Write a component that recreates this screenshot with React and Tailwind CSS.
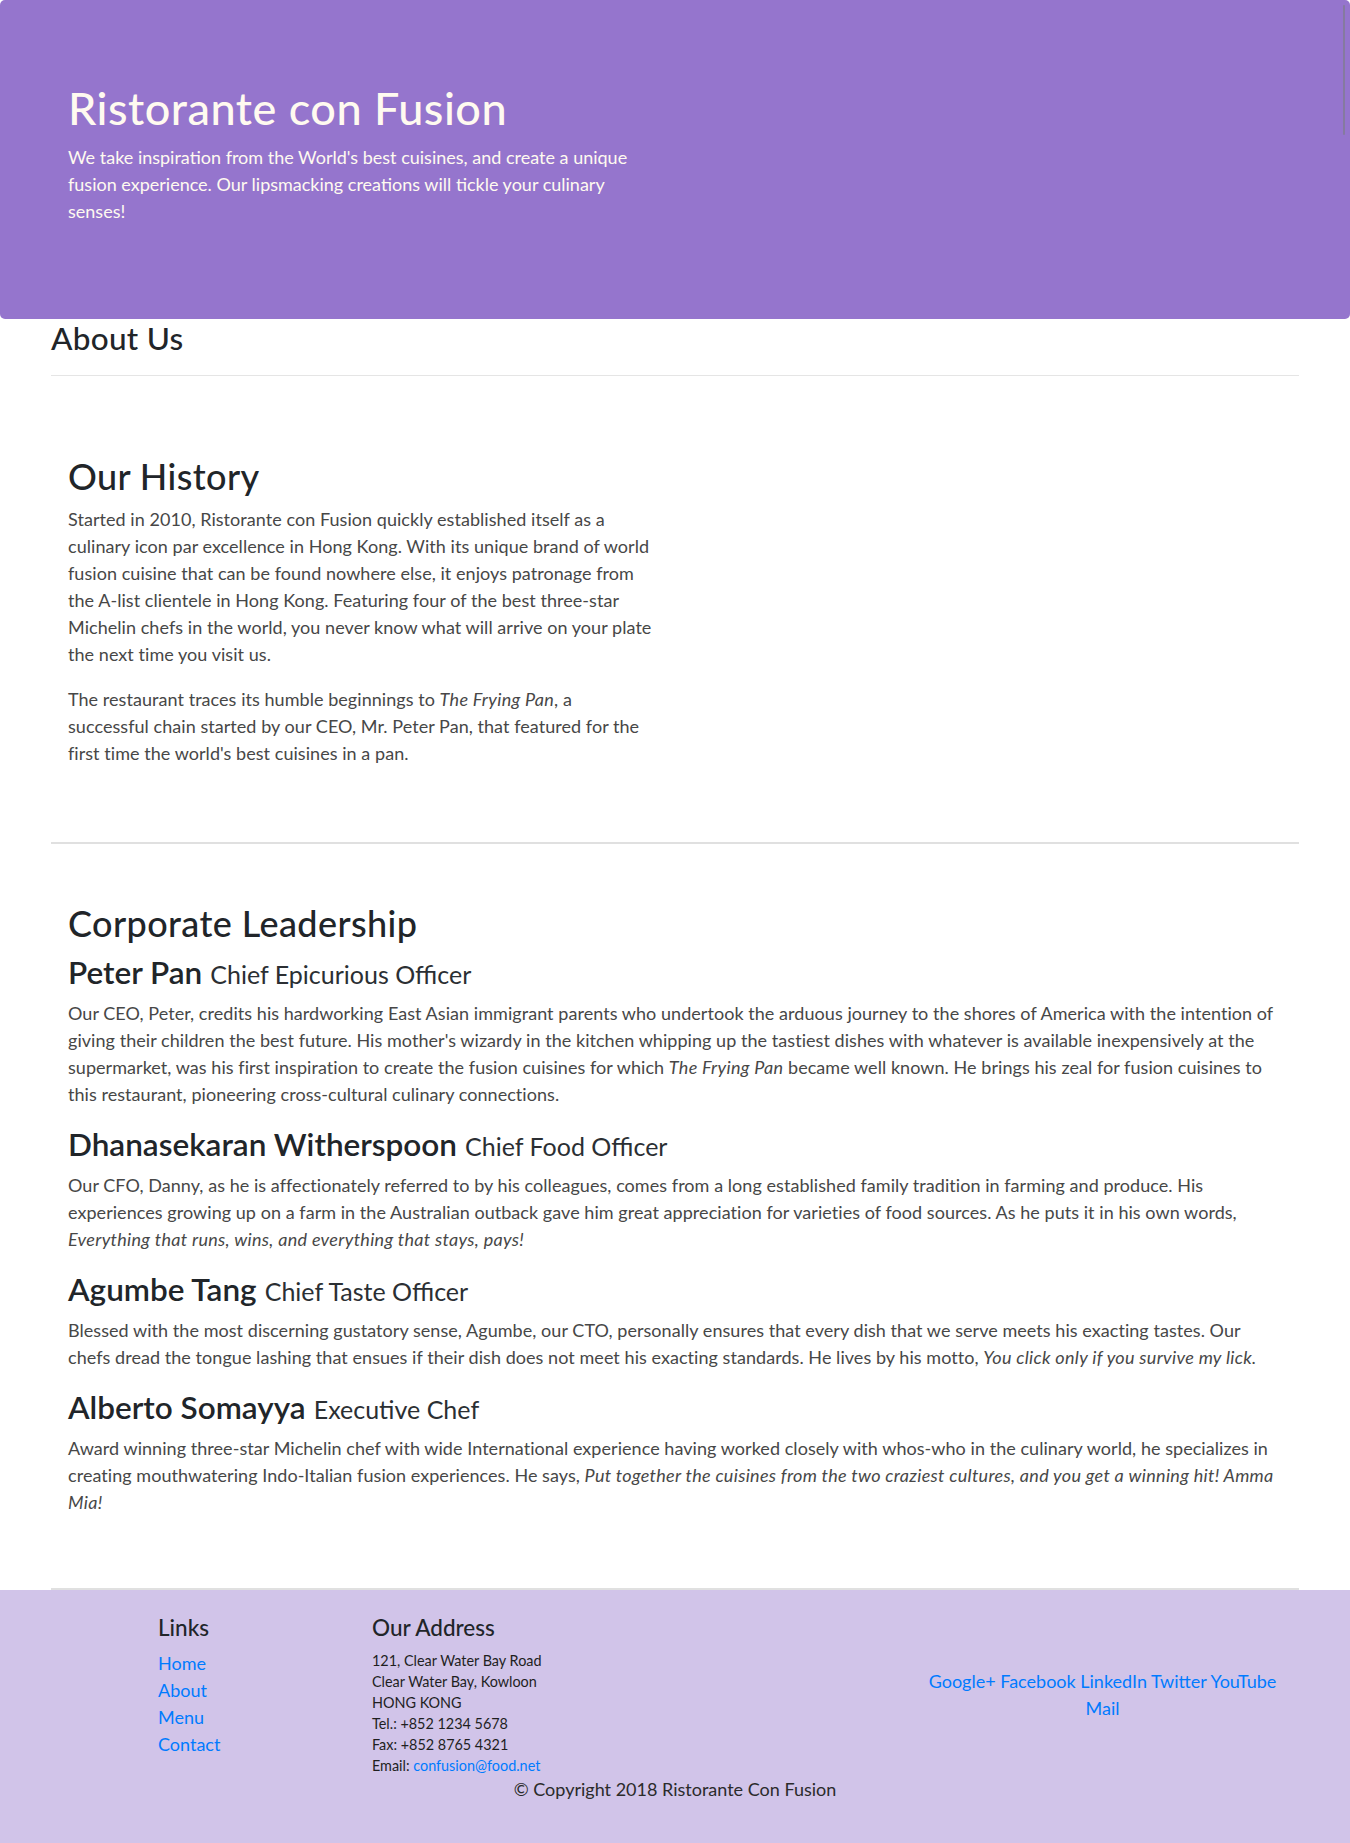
import React from "react";

function I({ children }) {
  return <em className="tracking-[0.3px]">{children}</em>;
}

const leaders = [
  {
    name: "Peter Pan",
    designation: "Chief Epicurious Officer",
    description: (
      <>
        Our CEO, Peter, credits his hardworking East Asian immigrant parents who undertook the arduous
        journey to the shores of America with the intention of giving their children the best future. His
        mother's wizardy in the kitchen whipping up the tastiest dishes with whatever is available
        inexpensively at the supermarket, was his first inspiration to create the fusion cuisines for which{" "}
        <I>The Frying Pan</I> became well known. He brings his zeal for fusion cuisines to this restaurant,
        pioneering cross-cultural culinary connections.
      </>
    ),
  },
  {
    name: "Dhanasekaran Witherspoon",
    designation: "Chief Food Officer",
    description: (
      <>
        Our CFO, Danny, as he is affectionately referred to by his colleagues, comes from a long established
        family tradition in farming and produce. His experiences growing up on a farm in the Australian
        outback gave him great appreciation for varieties of food sources. As he puts it in his own words,{" "}
        <I>Everything that runs, wins, and everything that stays, pays!</I>
      </>
    ),
  },
  {
    name: "Agumbe Tang",
    designation: "Chief Taste Officer",
    description: (
      <>
        Blessed with the most discerning gustatory sense, Agumbe, our CTO, personally ensures that every dish
        that we serve meets his exacting tastes. Our chefs dread the tongue lashing that ensues if their dish
        does not meet his exacting standards. He lives by his motto, <I>You click only if you survive my lick.</I>
      </>
    ),
  },
  {
    name: "Alberto Somayya",
    designation: "Executive Chef",
    description: (
      <>
        Award winning three-star Michelin chef with wide International experience having worked closely with
        whos-who in the culinary world, he specializes in creating mouthwatering Indo-Italian fusion
        experiences. He says,{" "}
        <I>Put together the cuisines from the two craziest cultures, and you get a winning hit! Amma Mia!</I>
      </>
    ),
  },
];

function Leader({ leader }) {
  return (
    <div>
      <h3 className="text-[31.5px] leading-[38px] mb-[7px] text-[#212529]">
        <span className="font-semibold">{leader.name}</span>{" "}
        <span className="text-[25px] font-normal text-[#2b2f33]">{leader.designation}</span>
      </h3>
      <p className="mb-[17px] tracking-[0.05px] text-[#474747]">{leader.description}</p>
    </div>
  );
}

export default function App() {
  return (
    <div
      className="relative w-full bg-white text-[18px] leading-[27px] text-[#212529]"
      style={{ fontFamily: "Lato, 'Noto Sans', sans-serif" }}
    >
      {/* Jumbotron */}
      <header className="bg-[#9575cd] text-[#fffaf0] rounded-[5px] pl-[68px] pt-[81px] pb-[76px]">
        <div className="w-[590px]">
          <h1 className="text-[45px] leading-[54px] font-medium tracking-[0.5px] mb-[9px]">
            Ristorante con Fusion
          </h1>
          <p className="mb-[18px]">
            We take inspiration from the World's best cuisines, and create a unique fusion experience. Our
            lipsmacking creations will tickle your culinary senses!
          </p>
        </div>
      </header>
      {/* scrollbar thumb */}
      <div className="absolute top-[5px] right-[5px] w-[2px] h-[130px] rounded-full bg-[#857aa0]" />

      <main className="mx-[51px]">
        <h3 className="text-[31.5px] leading-[38px] font-medium tracking-[0.3px]">About Us</h3>
        <hr className="mt-[18px] mb-[18px] border-t border-black/10" />

        {/* History */}
        <section className="min-h-[450px] pt-[61px] pb-[56px] px-[17px] border-b-2 border-[#e0e0e0]">
          <div className="w-[586px]">
            <h2 className="text-[36px] leading-[43px] font-medium tracking-[0.4px] mb-[8px]">Our History</h2>
            <p className="mb-[18px] tracking-[0.05px] text-[#474747]">
              Started in 2010, Ristorante con Fusion quickly established itself as a culinary icon par
              excellence in Hong Kong. With its unique brand of world fusion cuisine that can be found nowhere
              else, it enjoys patronage from the A-list clientele in Hong Kong. Featuring four of the best
              three-star Michelin chefs in the world, you never know what will arrive on your plate the next
              time you visit us.
            </p>
            <p className="mb-[18px] tracking-[0.05px] text-[#474747]">
              The restaurant traces its humble beginnings to <I>The Frying Pan</I>, a successful chain
              started by our CEO, Mr. Peter Pan, that featured for the first time the world's best cuisines in
              a pan.
            </p>
          </div>
        </section>

        {/* Leadership */}
        <section className="pt-[58px] pb-[55px] px-[17px] border-b-2 border-[#e0e0e0]">
          <h2 className="text-[36px] leading-[43px] font-medium tracking-[0.4px] mb-[8px]">
            Corporate Leadership
          </h2>
          {leaders.map((l) => (
            <Leader key={l.name} leader={l} />
          ))}
        </section>
      </main>

      {/* Footer */}
      <footer className="bg-[#d1c4e9] pt-[24px] pb-[22px]">
        <div className="w-[1282px] mx-auto">
          <div className="flex">
            <div className="ml-[107px] w-[214px] px-[17px]">
              <h5 className="text-[22.5px] leading-[27px] font-medium mb-[9px]">Links</h5>
              <ul className="text-[#007bff]">
                <li><a href="#">Home</a></li>
                <li><a href="#">About</a></li>
                <li><a href="#">Menu</a></li>
                <li><a href="#">Contact</a></li>
              </ul>
            </div>
            <div className="w-[534px] px-[17px]">
              <h5 className="text-[22.5px] leading-[27px] font-medium mb-[9px]">Our Address</h5>
              <address className="not-italic text-[14.4px] leading-[21px] text-[#1f1f1f]">
                121, Clear Water Bay Road<br />
                Clear Water Bay, Kowloon<br />
                HONG KONG<br />
                Tel.: +852 1234 5678<br />
                Fax: +852 8765 4321<br />
                Email: <a href="#" className="text-[#007bff]">confusion@food.net</a>
              </address>
            </div>
            <div className="w-[427px] px-[17px] self-center">
              <div className="w-[370px] mx-auto text-center text-[#007bff]">
                <a href="#">Google+</a> <a href="#">Facebook</a> <a href="#">LinkedIn</a>{" "}
                <a href="#">Twitter</a> <a href="#">YouTube</a> <a href="#">Mail</a>
              </div>
            </div>
          </div>
          <div className="flex justify-center">
            <p className="mb-[18px] text-[#2b2b2b]">© Copyright 2018 Ristorante Con Fusion</p>
          </div>
        </div>
      </footer>
    </div>
  );
}
